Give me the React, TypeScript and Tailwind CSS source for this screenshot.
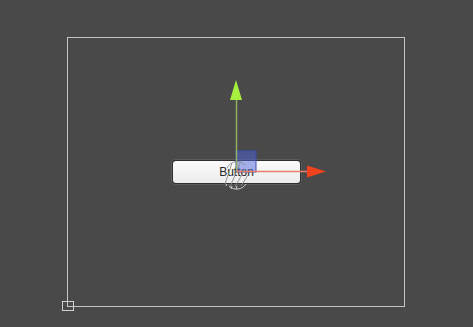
export default function App() {
  return (
    <div className="relative w-[473px] h-[327px] overflow-hidden bg-[#494949] font-['Liberation_Sans',Arial,sans-serif]">
      {/* canvas rect */}
      <div className="absolute left-[67px] top-[37px] w-[338px] h-[270px] border border-[#c4c4c4]" />
      {/* pivot handle bottom-left */}
      <div className="absolute left-[62px] top-[301px] w-[12px] h-[10px] border border-[#d0d0d0]" />

      {/* button */}
      <div className="absolute left-[171px] top-[159px] w-[131px] h-[26px] rounded-[4px] border border-[#5c5c5c] bg-[#2e2e2e] p-[1px]">
        <div className="flex h-full w-full items-center justify-center rounded-[3px] bg-gradient-to-b from-[#fbfbfb] to-[#ececec] text-[12px] text-[#262626]">
          Button
        </div>
      </div>

      {/* move gizmo */}
      <svg className="absolute left-0 top-0" width="473" height="327" viewBox="0 0 473 327">
        <rect x="236" y="151" width="20" height="21" fill="#4f63d8" fillOpacity="0.5" stroke="#3b4fb0" strokeWidth="1" />
        <line x1="236.5" y1="99" x2="236.5" y2="172" stroke="#8fb060" strokeWidth="1.5" />
        <polygon points="236,80 230,100 242,100" fill="#a6f03e" />
        <line x1="237" y1="171.5" x2="308" y2="171.5" stroke="#e8806a" strokeWidth="1.5" />
        <polygon points="326,171.5 307,165.5 307,177.5" fill="#f0421c" />
        <g stroke="#8a8a8a" strokeWidth="0.9" fill="none">
          <line x1="225" y1="184" x2="232" y2="163" />
          <line x1="230" y1="187" x2="240" y2="163" />
          <line x1="235" y1="187" x2="245" y2="169" />
          <line x1="241" y1="186" x2="248" y2="175" />
          <path d="M227 168 A11 11 0 0 1 245 165" />
        </g>
        <g stroke="#dcdcdc" strokeWidth="0.9" fill="none">
          <line x1="226" y1="186" x2="227" y2="184" />
          <line x1="231" y1="189" x2="232" y2="186" />
          <line x1="236" y1="189" x2="237" y2="186" />
          <path d="M229 186 A11 11 0 0 0 246 184" />
        </g>
      </svg>
    </div>
  )
}
